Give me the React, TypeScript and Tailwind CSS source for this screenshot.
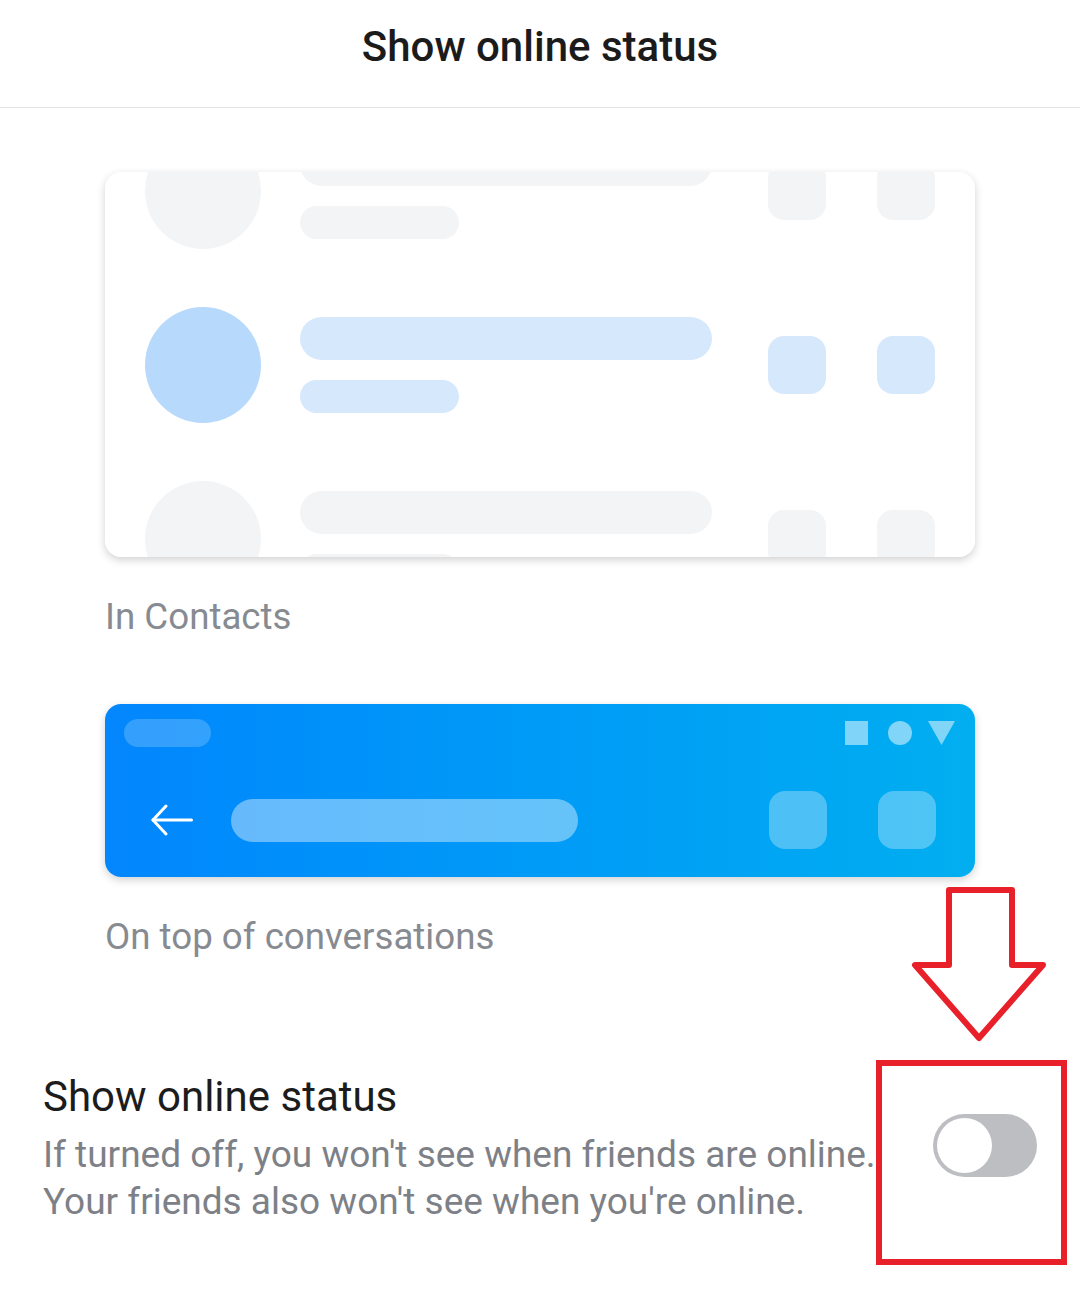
const FONT = { fontFamily: 'Roboto, "Noto Sans", sans-serif' };

function ContactRow({ tone }: { tone: 'gray' | 'blue' }) {
  const circle = tone === 'blue' ? 'bg-[#b6d9fc]' : 'bg-[#f3f4f6]';
  const bar = tone === 'blue' ? 'bg-[#d6e8fc]' : 'bg-[#f3f4f6]';
  return (
    <div className="flex items-center px-[40px]">
      <div className={`w-[116px] h-[116px] rounded-full shrink-0 ${circle}`} />
      <div className="flex flex-col gap-[20px] ml-[39px]">
        <div className={`w-[412px] h-[43px] rounded-full ${bar}`} />
        <div className={`w-[159px] h-[33px] rounded-full ${bar}`} />
      </div>
      <div className="flex gap-[51px] ml-auto">
        <div className={`w-[58px] h-[58px] rounded-[16px] ${bar}`} />
        <div className={`w-[58px] h-[58px] rounded-[16px] ${bar}`} />
      </div>
    </div>
  );
}

export default function App() {
  return (
    <div className="relative w-[1080px] h-[1310px] bg-white overflow-hidden" style={FONT}>
      <div className="h-[108px] border-b border-[#e4e4e4] flex justify-center pt-[21px]">
        <h1 className="text-[42px] leading-[52px] font-medium text-[#1b1b1b]">Show online status</h1>
      </div>

      <div className="px-[105px]">
        <div className="mt-[64px] h-[385px] rounded-[16px] bg-white overflow-hidden shadow-[0_3px_8px_rgba(0,0,0,0.18)]">
          <div className="flex flex-col gap-[58px] -mt-[39px]">
            <ContactRow tone="gray" />
            <ContactRow tone="blue" />
            <ContactRow tone="gray" />
          </div>
        </div>
        <p className="mt-[36px] text-[36.7px] leading-[48px] text-[#878b91]">In Contacts</p>

        <div className="mt-[63px] h-[173px] rounded-[16px] bg-gradient-to-r from-[#0486fd] to-[#03aef0] shadow-[0_3px_8px_rgba(0,0,0,0.18)] flex flex-col px-[19px]">
          <div className="flex items-center justify-between pt-[15px]">
            <div className="w-[87px] h-[28px] rounded-full bg-white/20" />
            <div className="flex items-center pr-[1px]">
              <div className="w-[23px] h-[24px] bg-white/50" />
              <div className="ml-[20px] w-[24px] h-[24px] rounded-full bg-white/50" />
              <svg className="ml-[16px]" width="27" height="24" viewBox="0 0 27 24">
                <polygon points="0,0 27,0 13.5,24" fill="rgba(255,255,255,0.5)" />
              </svg>
            </div>
          </div>
          <div className="flex items-center mt-[44px] pl-[27px] pr-[20px]">
            <svg width="42" height="32" viewBox="0 0 42 32" fill="none" stroke="white" strokeWidth="3" strokeLinecap="round" strokeLinejoin="round">
              <path d="M2 16H40.5" />
              <path d="M15 2L2 16L15 30" />
            </svg>
            <div className="ml-[38px] w-[347px] h-[43px] rounded-full bg-white/40" />
            <div className="flex gap-[51px] ml-auto">
              <div className="w-[58px] h-[58px] rounded-[16px] bg-white/30" />
              <div className="w-[58px] h-[58px] rounded-[16px] bg-white/30" />
            </div>
          </div>
        </div>
        <p className="mt-[36px] text-[36.7px] leading-[48px] text-[#878b91]">On top of conversations</p>
      </div>

      <div className="flex items-start px-[43px] mt-[112px]">
        <div className="flex-1">
          <p className="text-[42px] leading-[48px] text-[#1c1c1c]">Show online status</p>
          <p className="mt-[10px] text-[37px] leading-[47px] text-[#7d8187]">
            If turned off, you won't see when friends are online.
            <br />
            Your friends also won't see when you're online.
          </p>
        </div>
        <div className="mt-[41px] w-[104px] h-[63px] rounded-full bg-[#bcbec2] flex items-center pl-[4px]">
          <div className="w-[55px] h-[55px] rounded-full bg-white" />
        </div>
      </div>

      {/* red annotation */}
      <svg className="absolute left-[905px] top-[882px]" width="150" height="165" viewBox="0 0 150 165">
        <polygon
          points="44,8 107,8 107,83 138,83 74,156 10,83 44,83"
          fill="none"
          stroke="#e8202a"
          strokeWidth="6"
          strokeLinejoin="round"
        />
      </svg>
      <div className="absolute left-[876px] top-[1060px] w-[191px] h-[205px] border-[6px] border-[#e8202a]" />
    </div>
  );
}
